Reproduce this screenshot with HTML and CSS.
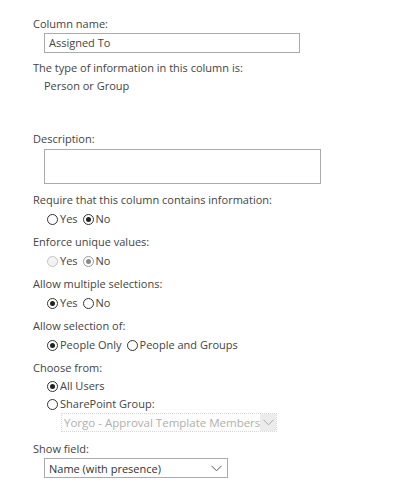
FILE: index.html
```html
<html>
<head>
<link rel="stylesheet" href="styles.css">
</head>
<body>
<div class="form">
  <div class="label">Column name:</div>
  <div class="textbox">Assigned To</div>

  <div class="label type-label">The type of information in this column is:</div>
  <div class="type-value">Person or Group</div>

  <div class="label desc-label">Description:</div>
  <div class="textarea"></div>

  <div class="group first">
    <div class="label">Require that this column contains information:</div>
    <div class="options">
      <span class="opt"><span class="radio"></span>Yes</span>
      <span class="opt"><span class="radio on"></span>No</span>
    </div>
  </div>

  <div class="group">
    <div class="label">Enforce unique values:</div>
    <div class="options disabled">
      <span class="opt"><span class="radio"></span>Yes</span>
      <span class="opt"><span class="radio on"></span>No</span>
    </div>
  </div>

  <div class="group">
    <div class="label">Allow multiple selections:</div>
    <div class="options">
      <span class="opt"><span class="radio on"></span>Yes</span>
      <span class="opt"><span class="radio"></span>No</span>
    </div>
  </div>

  <div class="group">
    <div class="label">Allow selection of:</div>
    <div class="options">
      <span class="opt"><span class="radio on"></span>People Only</span>
      <span class="opt"><span class="radio"></span>People and Groups</span>
    </div>
  </div>

  <div class="group">
    <div class="label">Choose from:</div>
    <div class="options stacked">
      <span class="opt"><span class="radio on"></span>All Users</span>
      <span class="opt"><span class="radio"></span>SharePoint Group:</span>
    </div>
    <div class="select disabled-select">
      <span class="select-text">Yorgo - Approval Template Members</span>
      <span class="arrow">
        <svg width="11" height="7" viewBox="0 0 11 7"><path d="M0.5 0.8 L5.5 5.8 L10.5 0.8" fill="none" stroke="#a8a8a8" stroke-width="1"/></svg>
      </span>
    </div>
  </div>

  <div class="label show-label">Show field:</div>
  <div class="select show-select">
    <span class="select-text">Name (with presence)</span>
    <span class="arrow">
      <svg width="11" height="7" viewBox="0 0 11 7"><path d="M0.5 0.8 L5.5 5.8 L10.5 0.8" fill="none" stroke="#555" stroke-width="1"/></svg>
    </span>
  </div>

  <div class="label cut-label">Column Formatting:</div>
</div>
</body>
</html>
```

FILE: styles.css
```css
body {
  margin: 0;
  background: #fff;
  font-family: "Open Sans", "Noto Sans", sans-serif;
  font-size: 11px;
  color: #444;
  overflow: hidden;
}
.form {
  padding: 15px 0 0 33px;
}
.label {
  line-height: 18px;
  white-space: nowrap;
}
.textbox {
  margin-left: 11px;
  width: 250px;
  height: 18px;
  border: 1px solid #ababab;
  line-height: 18px;
  padding-left: 4px;
  color: #444;
}
.type-label {
  margin-top: 6px;
}
.type-value {
  margin-left: 11px;
  line-height: 18px;
}
.desc-label {
  margin-top: 35px;
}
.textarea {
  margin-left: 11px;
  margin-top: 1px;
  width: 275px;
  height: 33px;
  border: 1px solid #ababab;
}
.group {
  margin-top: 4px;
}
.group.first {
  margin-top: 7px;
}
.options {
  display: flex;
  gap: 5px;
  margin-left: 14px;
  line-height: 20px;
}
.options.stacked {
  flex-direction: column;
  gap: 0;
  line-height: 18px;
}
.opt {
  display: flex;
  align-items: center;
  white-space: nowrap;
}
.radio {
  width: 9px;
  height: 9px;
  border: 1px solid #333;
  border-radius: 50%;
  margin-right: 2px;
  position: relative;
  box-sizing: content-box;
}
.radio.on::after {
  content: "";
  position: absolute;
  left: 2px;
  top: 2px;
  width: 5px;
  height: 5px;
  border-radius: 50%;
  background: #222;
}
.options.disabled .radio {
  border-color: #c4c4c4;
  background: #f3f3f3;
}
.options.disabled .radio.on {
  border-color: #9a9a9a;
  background: #fff;
}
.options.disabled .radio.on::after {
  background: #8a8a8a;
}
.select {
  display: flex;
  align-items: center;
  box-sizing: border-box;
}
.select-text {
  flex: 1;
  white-space: nowrap;
  overflow: hidden;
}
.arrow {
  display: flex;
  align-items: center;
  justify-content: center;
}
.disabled-select {
  margin-left: 28px;
  width: 216px;
  height: 19px;
  border: 1px dotted #d6d6d6;
  color: #b0b0b0;
  background: #fdfdfd;
  padding-left: 2px;
  font-size: 11.5px;
}
.disabled-select .arrow {
  width: 16px;
  height: 100%;
  background: #ececec;
}
.show-label {
  margin-top: 8px;
}
.show-select {
  margin-left: 11px;
  width: 184px;
  height: 20px;
  border: 1px solid #ababab;
  padding-left: 4px;
  color: #333;
}
.show-select .arrow {
  width: 22px;
}
.cut-label {
  margin-top: 8px;
}
```
